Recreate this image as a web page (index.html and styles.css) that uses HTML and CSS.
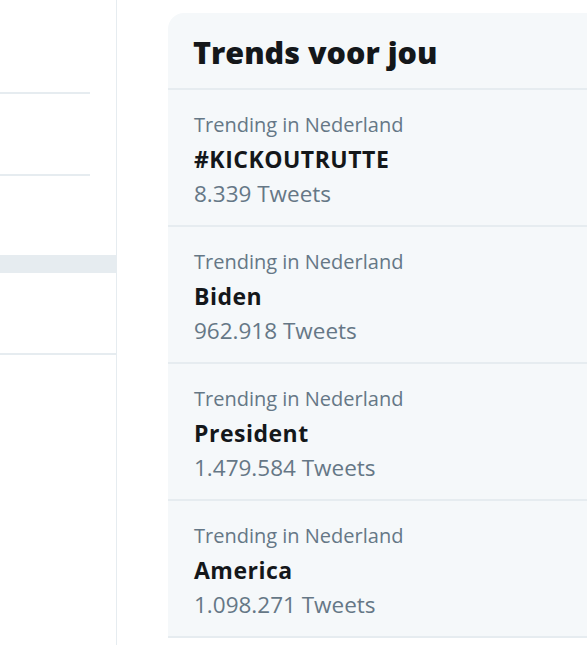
FILE: index.html
```html
<!DOCTYPE html>
<html>
<head>
<meta charset="utf-8">
<link rel="stylesheet" href="styles.css">
</head>
<body>
<div class="page">
  <div class="left">
    <div class="lrow short"></div>
    <div class="lrow short second"></div>
    <div class="band"></div>
    <div class="lrow full"></div>
  </div>
  <div class="gap"></div>
  <div class="side">
    <section class="card">
      <h2 class="card-title">Trends voor jou</h2>
      <div class="trend">
        <div class="meta">Trending in Nederland</div>
        <div class="name">#KICKOUTRUTTE</div>
        <div class="count">8.339 Tweets</div>
      </div>
      <div class="trend">
        <div class="meta">Trending in Nederland</div>
        <div class="name">Biden</div>
        <div class="count">962.918 Tweets</div>
      </div>
      <div class="trend">
        <div class="meta">Trending in Nederland</div>
        <div class="name">President</div>
        <div class="count">1.479.584 Tweets</div>
      </div>
      <div class="trend">
        <div class="meta">Trending in Nederland</div>
        <div class="name">America</div>
        <div class="count">1.098.271 Tweets</div>
      </div>
    </section>
  </div>
</div>
</body>
</html>
```
FILE: styles.css
```css
html, body {
  margin: 0;
  padding: 0;
  background: #ffffff;
  height: 100%;
  overflow: hidden;
}
body {
  font-family: "Open Sans", "Noto Sans", sans-serif;
}
.page {
  display: flex;
  height: 645px;
}
.left {
  width: 116px;
  border-right: 1px solid #e6ecf0;
  display: flex;
  flex-direction: column;
}
.lrow {
  border-bottom: 2px solid #e6ecf0;
}
.lrow.short {
  width: 90px;
  height: 92px;
}
.lrow.short.second {
  height: 80px;
}
.band {
  margin-top: 79px;
  height: 18px;
  background: #e6ecf0;
}
.lrow.full {
  height: 80px;
}
.gap {
  width: 51px;
}
.side {
  flex: 1;
  padding-top: 13px;
}
.card {
  background: #f5f8fa;
  border-top-left-radius: 16px;
  margin-right: -20px;
}
.card-title {
  margin: 0;
  height: 77px;
  box-sizing: border-box;
  padding: 19px 0 0 25px;
  font-size: 30.5px;
  line-height: 40px;
  font-weight: 800;
  color: #14171a;
  border-bottom: 2px solid #e6ecf0;
}
.trend {
  padding: 18px 0 14px 26px;
  border-bottom: 2px solid #e6ecf0;
}
.meta, .count {
  color: #657786;
}
.meta {
  font-size: 20px;
  line-height: 34px;
}
.name {
  font-size: 23px;
  line-height: 34px;
  letter-spacing: 0.5px;
  font-weight: 700;
  color: #14171a;
}
.count {
  font-size: 22.5px;
  line-height: 35px;
}
```
